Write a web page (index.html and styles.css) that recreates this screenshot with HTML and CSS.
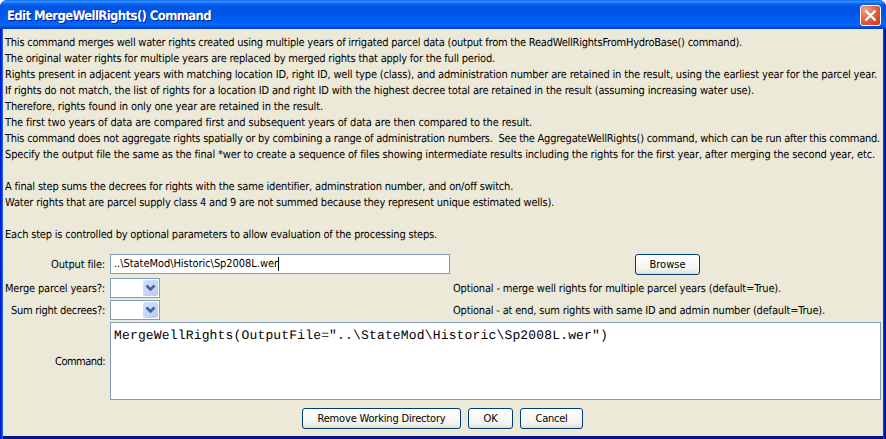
FILE: index.html
```html
<!DOCTYPE html>
<html lang="en">
<head>
<meta charset="utf-8">
<title>Edit MergeWellRights() Command</title>
<link rel="stylesheet" href="styles.css">
</head>
<body>
<div class="window">
  <header class="titlebar">
    <h1 class="title"><span data-w="204">Edit MergeWellRights() Command</span></h1>
    <button class="close" aria-label="Close"><svg width="21" height="21" viewBox="0 0 21 21"><path d="M5.5 5.5L15.5 15.5M15.5 5.5L5.5 15.5" stroke="#fff" stroke-width="2.3"/></svg></button>
  </header>
  <main class="content">
    <div class="notes">
      <p><span data-w="737">This command merges well water rights created using multiple years of irrigated parcel data (output from the ReadWellRightsFromHydroBase() command).</span></p>
      <p><span data-w="490">The original water rights for multiple years are replaced by merged rights that apply for the full period.</span></p>
      <p><span data-w="872">Rights present in adjacent years with matching location ID, right ID, well type (class), and administration number are retained in the result, using the earliest year for the parcel year.</span></p>
      <p><span data-w="749">If rights do not match, the list of rights for a location ID and right ID with the highest decree total are retained in the result (assuming increasing water use).</span></p>
      <p><span data-w="318">Therefore, rights found in only one year are retained in the result.</span></p>
      <p><span data-w="527">The first two years of data are compared first and subsequent years of data are then compared to the result.</span></p>
      <p><span data-w="875">This command does not aggregate rights spatially or by combining a range of administration numbers.&nbsp; See the AggregateWellRights() command, which can be run after this command.</span></p>
      <p><span data-w="870">Specify the output file the same as the final *wer to create a sequence of files showing intermediate results including the rights for the first year, after merging the second year, etc.</span></p>
      <p></p>
      <p><span data-w="508">A final step sums the decrees for rights with the same identifier, adminstration number, and on/off switch.</span></p>
      <p><span data-w="549">Water rights that are parcel supply class 4 and 9 are not summed because they represent unique estimated wells).</span></p>
      <p></p>
      <p><span data-w="432">Each step is controlled by optional parameters to allow evaluation of the processing steps.</span></p>
    </div>
    <div class="form">
      <label class="label label-output"><span data-w="54">Output file:</span></label>
      <div class="field"><span data-w="164">..\StateMod\Historic\Sp2008L.wer</span><i class="caret"></i></div>
      <button class="button browse"><span data-w="36">Browse</span></button>

      <label class="label"><span data-w="100">Merge parcel years?:</span></label>
      <div class="combo"><span class="arrow"><svg width="15" height="16" viewBox="0 0 15 16"><path d="M3.5 5.5L7.5 9.5L11.5 5.5" fill="none" stroke="#4d6185" stroke-width="2.6"/></svg></span></div>
      <div class="hint"><span data-w="328">Optional - merge well rights for multiple parcel years (default=True).</span></div>

      <label class="label"><span data-w="94">Sum right decrees?:</span></label>
      <div class="combo"><span class="arrow"><svg width="15" height="16" viewBox="0 0 15 16"><path d="M3.5 5.5L7.5 9.5L11.5 5.5" fill="none" stroke="#4d6185" stroke-width="2.6"/></svg></span></div>
      <div class="hint"><span data-w="372">Optional - at end, sum rights with same ID and admin number (default=True).</span></div>

      <label class="label"><span data-w="50">Command:</span></label>
      <div class="command"><span data-w="494">MergeWellRights(OutputFile="..\StateMod\Historic\Sp2008L.wer")</span></div>
    </div>
    <div class="actions">
      <button class="button remove"><span data-w="128">Remove Working Directory</span></button>
      <button class="button ok"><span data-w="14">OK</span></button>
      <button class="button cancel"><span data-w="32">Cancel</span></button>
    </div>
  </main>
</div>
<script src="fit.js"></script>
</body>
</html>
```
FILE: fit.js
```js
// Tracks each label so that it occupies its data-w width in pixels.
document.querySelectorAll('[data-w]').forEach(function (el) {
  var gap = Number(el.dataset.w) - el.getBoundingClientRect().width;
  el.style.letterSpacing = gap / el.textContent.length + 'px';
});
```
FILE: styles.css
```css
* { box-sizing: border-box; }

body {
  margin: 0;
  background: #fff;
  color: #000;
  font: 11px/16px "DejaVu Sans Condensed", "DejaVu Sans", sans-serif;
  font-stretch: condensed;
  text-rendering: geometricPrecision;
}

span[data-w] { white-space: pre; }

.window {
  display: flex;
  flex-direction: column;
  width: 886px;
  height: 439px;
  overflow: hidden;
  border-radius: 7px 7px 0 0;
  background: linear-gradient(to right, #0019cf 0 1px, #0831d9 1px 2px, #1660e8 2px 3px, #0855dd 3px 883px, #0441d8 883px 884px, #001dac 884px 885px, #00138c 885px);
}

.titlebar {
  display: flex;
  flex: none;
  align-items: center;
  justify-content: space-between;
  height: 29px;
  padding: 2px 5px 0 7px;
  background: linear-gradient(#0058e6 0, #3a93ff 1px, #2888ff 2px, #0864ee 4px, #0055e5 6px, #0054e3 13px, #0060f6 20px, #0066ff 25px, #005bf0 26px, #0043cf 28px, #003dc0 29px);
}

.title {
  margin: 0;
  padding-top: 2px;
  color: #fff;
  font: bold 13px/20px "DejaVu Sans Condensed", sans-serif;
  font-stretch: condensed;
  text-shadow: 1px 1px 0 #0a1883;
}

.close {
  width: 21px;
  height: 21px;
  padding: 0;
  border: 1px solid #fff;
  border-radius: 3px;
  background: radial-gradient(circle at 25% 20%, #f0a18a, #e3613c 50%, #cc3410);
}

.close svg { display: block; margin: -1px; }

.content {
  flex: 1;
  margin: 0 3px;
  padding: 6px 2px 0;
  background: #ece9d8;
  border-bottom: 3px solid #0831d9;
  border-image: linear-gradient(#0441d8 0 33%, #001dac 33% 66%, #00138c 66%) 0 0 3;
}

.notes p { height: 16px; margin: 0; white-space: nowrap; }

.form {
  display: grid;
  grid-template-columns: 100px 338px 423px;
  grid-template-rows: 22px 20px 20px 78px;
  column-gap: 5px;
  row-gap: 2px;
  width: 876px;
  padding-top: 11px;
}

.label {
  align-self: center;
  justify-self: end;
  padding-top: 2px;
  white-space: nowrap;
}

.label-output { padding-top: 0; }

.field {
  display: flex;
  align-items: center;
  width: 340px;
  height: 20px;
  padding-left: 3px;
  border: 1px solid #7f9db9;
  background: #fff;
}

.caret { width: 1px; height: 14px; background: #000; }

.combo {
  display: flex;
  justify-content: flex-end;
  width: 50px;
  height: 20px;
  padding: 1px;
  border: 1px solid #7f9db9;
  background: #fff;
}

.arrow {
  width: 15px;
  height: 16px;
  border-radius: 2px;
  background: linear-gradient(135deg, #d5e2fe, #b4cafb);
}

.arrow svg { display: block; }

.hint { align-self: center; padding-top: 2px; white-space: nowrap; }

.command {
  grid-column: 2 / 4;
  width: 771px;
  height: 78px;
  padding: 5px 3px;
  border: 1px solid #7f9db9;
  background: #fff;
  font: 13px/16px "Liberation Mono", monospace;
}

.button {
  display: flex;
  align-items: center;
  justify-content: center;
  height: 21px;
  padding: 0;
  border: 1px solid #003c74;
  border-radius: 3px;
  background: linear-gradient(#fff, #f3f3ef 75%, #e1ddd3);
  color: #000;
  font: inherit;
  white-space: nowrap;
}

.browse { width: 65px; margin-left: 182px; }

.actions {
  display: flex;
  gap: 7px;
  padding: 8px 0 0 297px;
}

.remove { width: 159px; }
.ok { width: 45px; }
.cancel { width: 63px; }
```
